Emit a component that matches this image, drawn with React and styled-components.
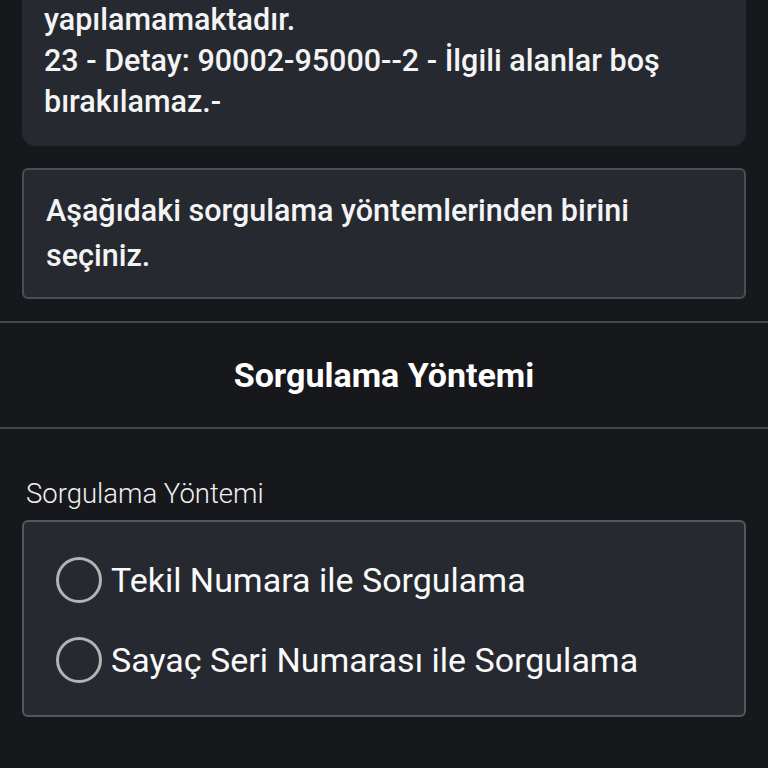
import React from "react";
import styled, { createGlobalStyle } from "styled-components";

const Global = createGlobalStyle`
  html, body { margin: 0; padding: 0; background: #17181c; }
  body { font-family: Roboto, "Noto Sans", sans-serif; color: #f4f4f5; }
`;

const Page = styled.div`
  width: 768px;
  height: 768px;
  overflow: hidden;
  background: #17181c;
  display: flex;
  flex-direction: column;
`;

const Section = styled.div`
  padding: 0 22px;
`;

const Card = styled.div`
  background: #262930;
  border-radius: ${(p) => (p.$bordered ? "6px" : "0 0 14px 14px")};
  border: ${(p) => (p.$bordered ? "2px solid #4b4e54" : "none")};
  padding: ${(p) => p.$pad};
  font-size: 30.5px;
  font-weight: 500;
  line-height: ${(p) => p.$lh};
  margin-top: ${(p) => p.$mt || "0"};
`;

const Divider = styled.div`
  height: 2px;
  background: #46484d;
`;

const Title = styled.h2`
  margin: 0;
  height: 104px;
  display: flex;
  align-items: center;
  justify-content: center;
  font-size: 34px;
  font-weight: 700;
  color: #ffffff;
`;

const Label = styled.div`
  font-size: 27.5px;
  font-weight: 300;
  line-height: 32px;
  padding: 49px 26px 10px;
  color: #f0f0f0;
`;

const Options = styled.div`
  background: #262930;
  border: 2px solid #54575c;
  border-radius: 6px;
  padding: 34px 0 32px 34px;
  display: flex;
  flex-direction: column;
  gap: 33px;
`;

const Option = styled.label`
  display: flex;
  align-items: center;
  gap: 9px;
  font-size: 34px;
  font-weight: 400;
  color: #fafafa;
  height: 47px;
`;

const Radio = styled.span`
  width: 40px;
  height: 40px;
  border-radius: 50%;
  border: 3px solid #b3b3b3;
  flex: none;
  margin-left: -2px;
`;

export default function App() {
  return (
    <Page>
      <Global />
      <Section>
        <Card $pad="0 22px 24px" $lh="41px" style={{ marginTop: "-1px" }}>
          yapılamamaktadır.
          <br />
          23 - Detay: 90002-95000--2 - İlgili alanlar boş
          <br />
          bırakılamaz.-
        </Card>
        <Card $bordered $pad="18px 22px 19px" $lh="45px" $mt="22px">
          Aşağıdaki sorgulama yöntemlerinden birini seçiniz.
        </Card>
      </Section>
      <div style={{ height: 22 }} />
      <Divider />
      <Title>Sorgulama Yöntemi</Title>
      <Divider />
      <Label>Sorgulama Yöntemi</Label>
      <Section>
        <Options>
          <Option>
            <Radio />
            Tekil Numara ile Sorgulama
          </Option>
          <Option>
            <Radio />
            Sayaç Seri Numarası ile Sorgulama
          </Option>
        </Options>
      </Section>
    </Page>
  );
}
